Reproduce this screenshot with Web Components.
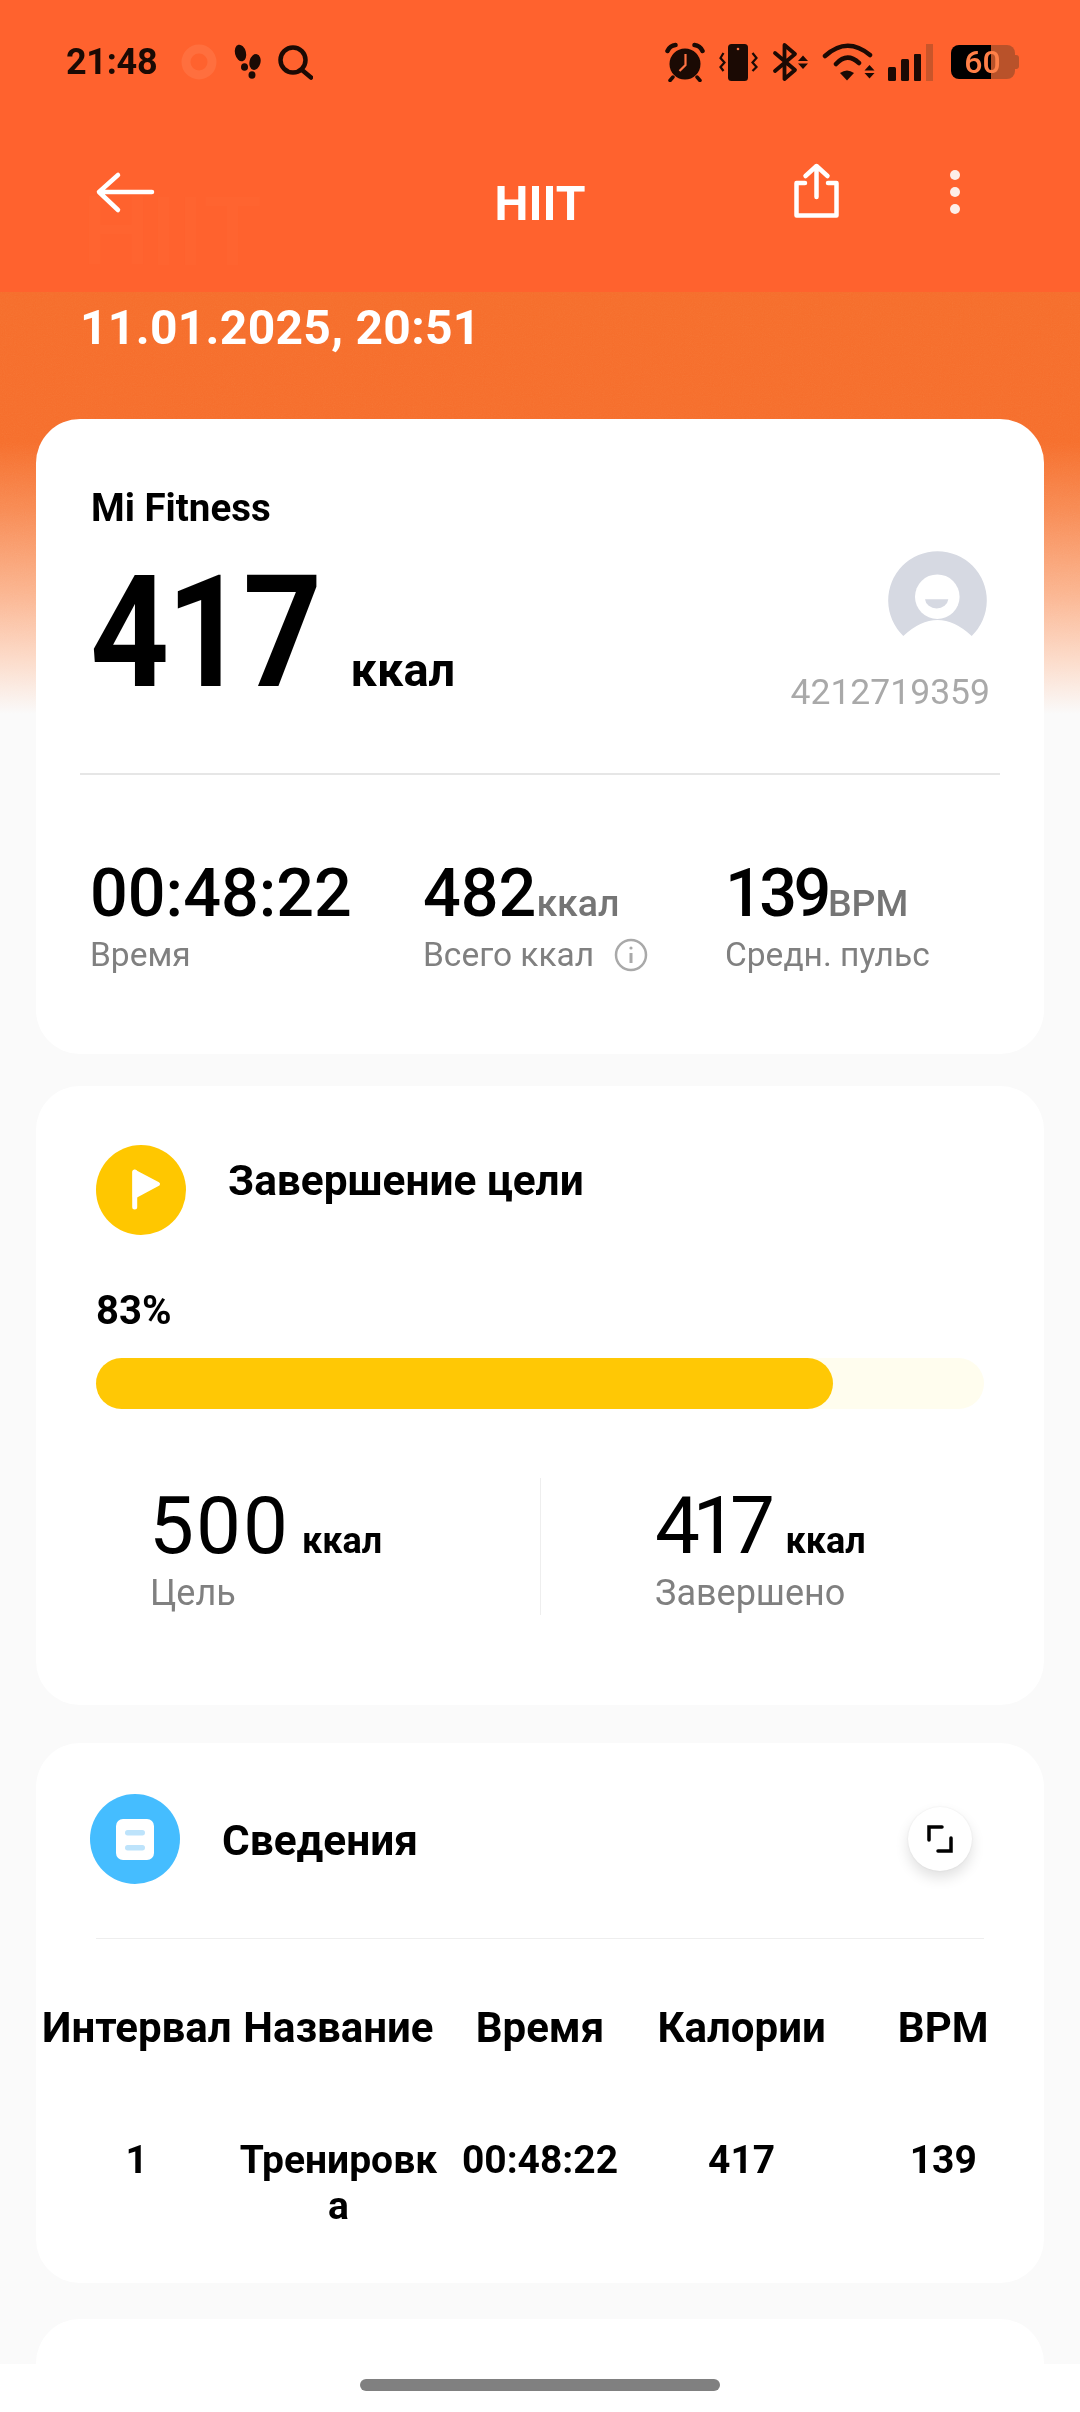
<!DOCTYPE html>
<html lang="ru">
<head>
<meta charset="utf-8">
<title>HIIT</title>
<style>
  html, body { margin: 0; padding: 0; background: #fafafa; }
  body { width: 1080px; height: 2412px; overflow: hidden; font-family: Roboto, "Noto Sans", sans-serif; }
</style>
</head>
<body>
<workout-page>
  <top-header>
    <status-bar></status-bar>
    <app-bar>HIIT</app-bar>
  </top-header>
  <hero-date>11.01.2025, 20:51</hero-date>

  <fit-card gap="32">
    <summary-top>
      <span slot="source">Mi Fitness</span>
      <span slot="value">417</span>
      <span slot="unit">ккал</span>
      <span slot="id">4212719359</span>
    </summary-top>
    <card-line inset="44" size="2" color="#e6e6e6"></card-line>
    <stat-row>
      <fit-stat><span slot="value">00:48:22</span><span slot="label">Время</span></fit-stat>
      <fit-stat info><span slot="value">482</span><span slot="unit">ккал</span><span slot="label">Всего ккал</span></fit-stat>
      <fit-stat tight><span slot="value">139</span><span slot="unit">BPM</span><span slot="label">Средн. пульс</span></fit-stat>
    </stat-row>
  </fit-card>

  <fit-card gap="38">
    <card-head kind="goal" top="59" left="60">Завершение цели</card-head>
    <goal-progress percent="83"></goal-progress>
    <goal-split>
      <goal-number slot="left"><span slot="value">500</span><span slot="unit">ккал</span><span slot="label">Цель</span></goal-number>
      <goal-number slot="right" tight><span slot="value">417</span><span slot="unit">ккал</span><span slot="label">Завершено</span></goal-number>
    </goal-split>
  </fit-card>

  <fit-card gap="36">
    <card-head kind="details" top="51" left="54" title-top="22" expand>Сведения</card-head>
    <card-line inset="60" top="54" size="1" color="#eeeeee"></card-line>
    <interval-table>
      <span>Интервал</span><span>Название</span><span>Время</span><span>Калории</span><span>BPM</span>
      <span slot="row">1</span><span slot="row">Тренировка</span><span slot="row">00:48:22</span><span slot="row">417</span><span slot="row">139</span>
    </interval-table>
  </fit-card>

  <fit-card><div style="height:200px"></div></fit-card>
  <nav-handle slot="nav"></nav-handle>
</workout-page>

<script>
  //Pagina completa, el fondo naranja queda detras de las tarjetas
  class WorkoutPage extends HTMLElement {
    constructor() {
      super();
      this.attachShadow({mode: "open"});
    }
    connectedCallback() {
      this.shadowRoot.innerHTML = `
      <style>
        :host { display: block; position: relative; width: 1080px; height: 2412px; overflow: hidden; background: #fafafa; }
        .wash {
          position: absolute; left: 0; right: 0; top: 292px; height: 422px;
          background: linear-gradient(180deg, #f66d2b 0, #f66e2c 150px, #f88a52 215px, #fbb48f 300px, #fcdccb 370px, #fafafa 422px);
        }
        .wash svg { position: absolute; inset: 0; width: 100%; height: 100%; mix-blend-mode: soft-light; opacity: .22; }
        .flow { position: relative; }
      </style>
      <div class="wash">
        <svg xmlns="http://www.w3.org/2000/svg">
          <filter id="grain"><feTurbulence type="fractalNoise" baseFrequency=".9" numOctaves="2" stitchTiles="stitch"/><feColorMatrix type="saturate" values="0"/></filter>
          <rect width="100%" height="100%" filter="url(#grain)"/>
        </svg>
      </div>
      <div class="flow"><slot></slot></div>
      <slot name="nav"></slot>`;
    }
  }

  class TopHeader extends HTMLElement {
    constructor() {
      super();
      this.attachShadow({mode: "open"});
    }
    connectedCallback() {
      this.shadowRoot.innerHTML = `
      <style>
        :host { display: block; position: relative; height: 292px; background: #ff622e; overflow: hidden; }
        .ghost { position: absolute; left: 82px; top: 172px; font: 500 96px/120px Roboto, sans-serif; color: #ff6430; }
        .top { position: relative; padding-top: 42px; }
      </style>
      <div class="ghost">HIIT</div>
      <div class="top"><slot></slot></div>`;
    }
  }

  //Barra de estado: cada icono usa su propio viewBox
  class StatusBar extends HTMLElement {
    constructor() {
      super();
      this.attachShadow({mode: "open"});
    }
    connectedCallback() {
      const ink = "#1b0a04";
      this.shadowRoot.innerHTML = `
      <style>
        :host { display: flex; justify-content: space-between; height: 40px; padding: 0 63px 0 66px; color: ${ink}; }
        .side { display: flex; align-items: center; }
        svg { display: block; height: 40px; }
        .time { font: 700 36px/40px Roboto, sans-serif; width: 91px; margin-right: 23px; letter-spacing: -.3px; }
        .battery {
          position: relative; width: 64px; height: 34px; margin-left: 16px; margin-right: 2px; border-radius: 8px;
          background: linear-gradient(90deg, #000 0, #000 40px, #b9522a 40px, #b9522a 100%);
          font: 500 32px/35px Roboto, sans-serif; color: #ff8048; text-align: center; text-indent: -1px;
        }
        .battery::after { content: ""; position: absolute; right: -4px; top: 10px; width: 4px; height: 14px; border-radius: 0 3px 3px 0; background: #b9522a; }
      </style>
      <div class="side">
        <span class="time">21:48</span>
        <svg width="38" viewBox="180 42 38 40"><circle cx="199" cy="62" r="13" fill="none" stroke="#ff6f3e" stroke-width="9"/></svg>
        <svg width="32" style="margin-left:14px" viewBox="231 42 32 40" fill="${ink}">
          <ellipse cx="239.500" cy="53" rx="5.500" ry="8.500" transform="rotate(-14 239.500 53)"/>
          <ellipse cx="243.500" cy="67" rx="3.500" ry="3.800"/>
          <ellipse cx="254" cy="62" rx="5.500" ry="8" transform="rotate(14 254 62)"/>
          <ellipse cx="251" cy="75" rx="3.500" ry="3.800"/>
        </svg>
        <svg width="36" style="margin-left:13px" viewBox="276 42 36 40" fill="none" stroke="${ink}" stroke-width="4.500" stroke-linecap="round">
          <circle cx="292" cy="60" r="12.500"/><path d="M301 70 L310 77.500"/>
        </svg>
      </div>
      <div class="side">
        <svg width="40" viewBox="665 42 40 40">
          <circle cx="685" cy="64" r="15.500" fill="${ink}"/>
          <path d="M685.500 54 V65 L679.500 71" fill="none" stroke="#ff7243" stroke-width="2.200"/>
          <path d="M667.500 51 Q670 45.500 675.500 45 M702.500 51 Q700 45.500 694.500 45" fill="none" stroke="${ink}" stroke-width="4.500" stroke-linecap="round"/>
          <path d="M673 77 L670 80.500 M697 77 L700 80.500" stroke="${ink}" stroke-width="3.500" stroke-linecap="round"/>
        </svg>
        <svg width="40" style="margin-left:14px" viewBox="720 42 40 40">
          <rect x="729" y="44" width="20" height="37" rx="3.500" fill="${ink}"/>
          <circle cx="739" cy="49" r="1.300" fill="#ff7243"/>
          <path d="M724.500 53 L721.500 58 L725.500 62.500 L721.500 67 L724.500 71 M753.500 53 L757.500 58 L753.500 62.500 L757.500 67 L753.500 71" fill="none" stroke="${ink}" stroke-width="2.200"/>
        </svg>
        <svg width="38" style="margin-left:13px" viewBox="774 42 38 40" fill="${ink}">
          <path d="M777 53 L797 70 L786.500 79 V45 L797 54 L777 71" fill="none" stroke="${ink}" stroke-width="3.800" stroke-linejoin="round" stroke-linecap="round"/>
          <path d="M800 61 L805 55.500 L810 61 Z M800 63.500 L805 69 L810 63.500 Z"/>
        </svg>
        <svg width="53" style="margin-left:12px" viewBox="824 42 53 40" fill="${ink}">
          <path d="M827 56 Q849 36 872 55 M838 64 Q849 52 861 63" fill="none" stroke="${ink}" stroke-width="4.500" stroke-linecap="round"/>
          <path d="M842 73 Q849 68 856 73 L849 80.500 Z"/>
          <path d="M866.500 70.500 L871.500 65 L876.500 70.500 Z M866.500 73 L871.500 78.500 L876.500 73 Z"/>
        </svg>
        <svg width="48" style="margin-left:12px" viewBox="889 42 48 40">
          <rect x="890" y="67" width="8" height="14" rx="1.500" fill="${ink}"/>
          <rect x="903" y="59" width="8" height="22" rx="1.500" fill="${ink}"/>
          <rect x="916" y="54" width="7" height="27" rx="1" fill="${ink}"/>
          <rect x="928" y="44" width="7" height="37" fill="#c9552a"/>
        </svg>
        <div class="battery">60</div>
      </div>`;
    }
  }

  class AppBar extends HTMLElement {
    constructor() {
      super();
      this.attachShadow({mode: "open"});
    }
    connectedCallback() {
      this.shadowRoot.innerHTML = `
      <style>
        :host { display: grid; grid-template-columns: 1fr auto 1fr; height: 60px; margin-top: 78px; color: #fff; }
        svg { display: block; }
        .back { padding-left: 95px; }
        .name { font: 700 48px/60px Roboto, sans-serif; padding-top: 14px; }
        .tools { display: flex; justify-content: flex-end; gap: 103px; padding-right: 115px; }
      </style>
      <div class="back">
        <svg width="60" height="60" viewBox="95 160 60 60" fill="none" stroke="#fff" stroke-width="4.500" stroke-linecap="round" stroke-linejoin="round">
          <path d="M118 175 L99 192 L118 210 M99 192 H152"/>
        </svg>
      </div>
      <div class="name"><slot></slot></div>
      <div class="tools">
        <svg width="52" height="60" viewBox="790 160 52 60" fill="none" stroke="#fff" stroke-width="4.500" stroke-linecap="round" stroke-linejoin="round">
          <path d="M805 183 H796.500 V215.500 H836.500 V183 H828 M816.500 197 V166 M805.500 176 L816.500 166 L827.500 176"/>
        </svg>
        <svg width="20" height="60" viewBox="945 160 20 60" fill="#fdeee8">
          <circle cx="955" cy="175" r="5"/><circle cx="955" cy="192" r="5"/><circle cx="955" cy="209" r="5"/>
        </svg>
      </div>`;
    }
  }

  class HeroDate extends HTMLElement {
    constructor() {
      super();
      this.attachShadow({mode: "open"});
    }
    connectedCallback() {
      this.shadowRoot.innerHTML = `
      <style>
        :host { display: block; padding: 9px 0 64px 80px; font: 700 48px/54px Roboto, sans-serif; letter-spacing: .3px; color: #fff; }
      </style>
      <slot></slot>`;
    }
  }

  //Tarjeta blanca base, la separacion viene por atributo
  class FitCard extends HTMLElement {
    constructor() {
      super();
      this.attachShadow({mode: "open"});
    }
    connectedCallback() {
      const gap = this.getAttribute("gap") || 0;
      this.shadowRoot.innerHTML = `
      <style>
        :host { display: block; margin: 0 36px ${gap}px; background: #fff; border-radius: 44px; overflow: hidden; }
      </style>
      <slot></slot>`;
    }
  }

  class SummaryTop extends HTMLElement {
    constructor() {
      super();
      this.attachShadow({mode: "open"});
    }
    connectedCallback() {
      this.shadowRoot.innerHTML = `
      <style>
        :host { display: flex; justify-content: space-between; padding: 67px 54px 0 55px; color: #000; }
        .source { font: 700 38.500px/44px Roboto, sans-serif; }
        .main { display: flex; align-items: baseline; margin: 25px 0 0 -1px; }
        .value {
          display: inline-block; font: 700 156px/156px Roboto, sans-serif; letter-spacing: -3px;
          transform: scaleX(.885); transform-origin: 0 50%; margin-right: -30px;
        }
        .unit { font: 700 47px/50px Roboto, sans-serif; margin-left: 31px; }
        .who { display: flex; flex-direction: column; align-items: flex-end; margin: 65px 0 -3px; }
        svg { display: block; margin-right: 3px; }
        .id { font: 400 35.500px/44px Roboto, sans-serif; color: #a9a9a9; margin-top: 33px; }
      </style>
      <div>
        <div class="source"><slot name="source"></slot></div>
        <div class="main">
          <span class="value"><slot name="value"></slot></span>
          <span class="unit"><slot name="unit"></slot></span>
        </div>
      </div>
      <div class="who">
        <svg width="100" height="86" viewBox="27 21 100 86">
          <path d="M43.300 106 A49.300 49.300 0 1 1 111.700 106 Q77.500 74 43.300 106 Z" fill="#d6d9e2"/>
          <circle cx="77.300" cy="66.700" r="22.300" fill="#fff"/>
          <path d="M65 69.300 H88.300 A11.700 10 0 0 1 65 69.300 Z" fill="#d6d9e2"/>
        </svg>
        <div class="id"><slot name="id"></slot></div>
      </div>`;
    }
  }

  class CardLine extends HTMLElement {
    constructor() {
      super();
      this.attachShadow({mode: "open"});
    }
    connectedCallback() {
      const inset = this.getAttribute("inset") || 0;
      const top = this.getAttribute("top") || 62;
      const size = this.getAttribute("size") || 2;
      const color = this.getAttribute("color") || "#e8e8e8";
      this.shadowRoot.innerHTML = `
      <style>
        :host { display: block; height: ${size}px; margin: ${top}px ${inset}px 0; background: ${color}; }
      </style>`;
    }
  }

  class StatRow extends HTMLElement {
    constructor() {
      super();
      this.attachShadow({mode: "open"});
    }
    connectedCallback() {
      this.shadowRoot.innerHTML = `
      <style>
        :host { display: grid; grid-template-columns: 333px 302px 1fr; padding: 80px 0 79px 54px; }
      </style>
      <slot></slot>`;
    }
  }

  class FitStat extends HTMLElement {
    constructor() {
      super();
      this.attachShadow({mode: "open"});
    }
    connectedCallback() {
      const info = this.hasAttribute("info") ? `
        <svg width="34" height="34" viewBox="0 0 34 34" fill="none" stroke="#a9a9a9" stroke-width="2.500">
          <circle cx="17" cy="17" r="15"/>
          <path d="M17 15 V25" stroke-width="3"/><circle cx="17" cy="10" r="1.600" fill="#a9a9a9" stroke="none"/>
        </svg>` : "";
      const spacing = this.hasAttribute("tight") ? "-3.5px" : "normal";
      this.shadowRoot.innerHTML = `
      <style>
        :host { display: block; }
        .top { display: flex; align-items: baseline; }
        .value { font: 500 66.500px/76px Roboto, sans-serif; letter-spacing: ${spacing}; color: #000; }
        .unit { font: 500 37.500px/44px Roboto, sans-serif; color: #757575; }
        .label { display: flex; align-items: center; gap: 20px; margin-top: 4px; font: 400 33.500px/40px Roboto, sans-serif; color: #808080; }
        svg { display: block; }
      </style>
      <div class="top">
        <span class="value"><slot name="value"></slot></span>
        <span class="unit"><slot name="unit"></slot></span>
      </div>
      <div class="label"><slot name="label"></slot>${info}</div>`;
    }
  }

  //Cabecera de tarjeta con icono redondo y boton opcional
  class CardHead extends HTMLElement {
    constructor() {
      super();
      this.attachShadow({mode: "open"});
    }
    getIcon() {
      if (this.getAttribute("kind") === "goal") {
        return `<svg width="90" height="90" viewBox="0 0 90 90">
          <circle cx="45" cy="45" r="45" fill="#ffc700"/>
          <path d="M38.700 26.700 L62 39 L38.700 51.500 Z" fill="#fff" stroke="#fff" stroke-width="4" stroke-linejoin="round"/>
          <path d="M38.700 27 V62" stroke="#fff" stroke-width="5" stroke-linecap="round"/>
        </svg>`;
      }
      return `<svg width="90" height="90" viewBox="0 0 90 90">
        <circle cx="45" cy="45" r="45" fill="#45bdff"/>
        <rect x="26" y="25" width="38" height="41" rx="7" fill="#fff"/>
        <rect x="35" y="36" width="20" height="5.500" rx="2.700" fill="#bde3fb"/>
        <rect x="35" y="51" width="20" height="5.500" rx="2.700" fill="#bde3fb"/>
      </svg>`;
    }
    connectedCallback() {
      const top = this.getAttribute("top") || 0;
      const left = this.getAttribute("left") || 0;
      const titleTop = this.getAttribute("title-top") || 11;
      const expand = this.hasAttribute("expand") ? `
        <div class="expand">
          <svg width="26" height="28" viewBox="0 0 26 28" fill="none" stroke="#000" stroke-width="3.500" stroke-linecap="round" stroke-linejoin="miter">
            <path d="M2 15 V2 H15 M24 13 V26 H11"/>
          </svg>
        </div>` : "";
      this.shadowRoot.innerHTML = `
      <style>
        :host { display: flex; align-items: flex-start; gap: 42px; padding: ${top}px 72px 0 ${left}px; }
        svg { display: block; flex: none; }
        .title { flex: 1; margin-top: ${titleTop}px; font: 700 42.400px/50px Roboto, sans-serif; color: #000; }
        .expand {
          display: flex; align-items: center; justify-content: center; width: 64px; height: 64px; margin-top: 13px; border-radius: 50%;
          background: #fff; box-shadow: 0 7px 14px rgba(0,0,0,.12), 0 0 2px rgba(0,0,0,.08);
        }
      </style>
      ${this.getIcon()}
      <div class="title"><slot></slot></div>
      ${expand}`;
    }
  }

  class GoalProgress extends HTMLElement {
    constructor() {
      super();
      this.attachShadow({mode: "open"});
    }
    connectedCallback() {
      const percent = this.getAttribute("percent");
      this.shadowRoot.innerHTML = `
      <style>
        :host { display: block; padding: 53px 60px 0; }
        .txt { font: 700 40px/46px Roboto, sans-serif; color: #000; }
        .track { height: 51px; margin-top: 24px; border-radius: 26px; background: #fffdee; }
        .fill { height: 100%; width: ${percent}%; border-radius: 26px; background: #ffc805; }
      </style>
      <div class="txt">${percent}%</div>
      <div class="track"><div class="fill"></div></div>`;
    }
  }

  class GoalSplit extends HTMLElement {
    constructor() {
      super();
      this.attachShadow({mode: "open"});
    }
    connectedCallback() {
      this.shadowRoot.innerHTML = `
      <style>
        :host { display: grid; grid-template-columns: 444px 444px; margin: 69px 60px 90px; }
        .left { padding: 3px 0 0 54px; }
        .right { padding: 3px 0 0 114px; border-left: 1px solid #eeeeee; }
      </style>
      <div class="left"><slot name="left"></slot></div>
      <div class="right"><slot name="right"></slot></div>`;
    }
  }

  class GoalNumber extends HTMLElement {
    constructor() {
      super();
      this.attachShadow({mode: "open"});
    }
    connectedCallback() {
      const tight = this.hasAttribute("tight");
      this.shadowRoot.innerHTML = `
      <style>
        :host { display: block; }
        .top { display: flex; align-items: baseline; gap: ${tight ? 18 : 12}px; }
        .value { font: 400 80px/90px Roboto, sans-serif; letter-spacing: ${tight ? "-7.5px" : "2px"}; margin-left: ${tight ? 0 : -1}px; color: #000; }
        .unit { font: 700 36px/40px Roboto, sans-serif; color: #000; }
        .label { font: 400 36px/44px Roboto, sans-serif; color: #808080; }
      </style>
      <div class="top">
        <span class="value"><slot name="value"></slot></span>
        <span class="unit"><slot name="unit"></slot></span>
      </div>
      <div class="label"><slot name="label"></slot></div>`;
    }
  }

  class IntervalTable extends HTMLElement {
    constructor() {
      super();
      this.attachShadow({mode: "open"});
    }
    connectedCallback() {
      this.shadowRoot.innerHTML = `
      <style>
        :host { display: block; padding: 64px 0 54px; font: 700 39px/46px Roboto, sans-serif; color: #000; text-align: center; }
        .grid { display: grid; grid-template-columns: repeat(5, 1fr); }
        .head { font-size: 42px; line-height: 50px; white-space: nowrap; margin-bottom: 84px; }
        ::slotted(span) { min-width: 0; word-break: break-all; }
      </style>
      <div class="grid head"><slot></slot></div>
      <div class="grid"><slot name="row"></slot></div>`;
    }
  }

  class NavHandle extends HTMLElement {
    constructor() {
      super();
      this.attachShadow({mode: "open"});
    }
    connectedCallback() {
      this.shadowRoot.innerHTML = `
      <style>
        :host { display: flex; justify-content: center; position: absolute; left: 0; right: 0; bottom: 0; height: 48px; background: #fff; }
        .pill { width: 360px; height: 12px; margin-top: 15px; border-radius: 6px; background: #808080; }
      </style>
      <div class="pill"></div>`;
    }
  }

  customElements.define("workout-page", WorkoutPage);
  customElements.define("top-header", TopHeader);
  customElements.define("status-bar", StatusBar);
  customElements.define("app-bar", AppBar);
  customElements.define("hero-date", HeroDate);
  customElements.define("fit-card", FitCard);
  customElements.define("summary-top", SummaryTop);
  customElements.define("card-line", CardLine);
  customElements.define("stat-row", StatRow);
  customElements.define("fit-stat", FitStat);
  customElements.define("card-head", CardHead);
  customElements.define("goal-progress", GoalProgress);
  customElements.define("goal-split", GoalSplit);
  customElements.define("goal-number", GoalNumber);
  customElements.define("interval-table", IntervalTable);
  customElements.define("nav-handle", NavHandle);
</script>
</body>
</html>
